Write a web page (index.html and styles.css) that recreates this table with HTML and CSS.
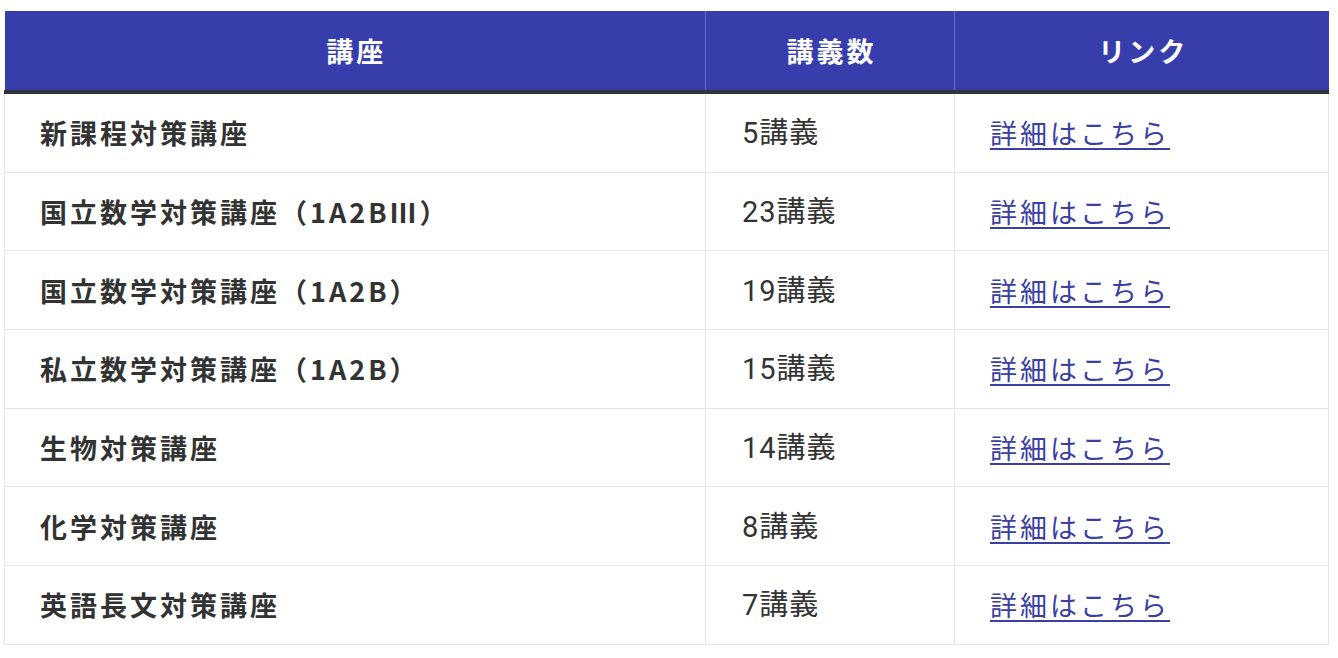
FILE: index.html
```html
<!DOCTYPE html>
<html lang="ja">
<head>
<meta charset="utf-8">
<title>講座一覧</title>
<link rel="stylesheet" href="styles.css">
</head>
<body>
<table class="course-table">
  <colgroup>
    <col class="col-name">
    <col class="col-count">
    <col class="col-link">
  </colgroup>
  <thead>
    <tr>
      <th>講座</th>
      <th>講義数</th>
      <th>リンク</th>
    </tr>
  </thead>
  <tbody>
    <tr><td class="name">新課程対策講座</td><td class="count">5講義</td><td class="link"><a href="#">詳細はこちら</a></td></tr>
    <tr><td class="name">国立数学対策講座（1A2BⅢ）</td><td class="count">23講義</td><td class="link"><a href="#">詳細はこちら</a></td></tr>
    <tr><td class="name">国立数学対策講座（1A2B）</td><td class="count">19講義</td><td class="link"><a href="#">詳細はこちら</a></td></tr>
    <tr><td class="name">私立数学対策講座（1A2B）</td><td class="count">15講義</td><td class="link"><a href="#">詳細はこちら</a></td></tr>
    <tr><td class="name">生物対策講座</td><td class="count">14講義</td><td class="link"><a href="#">詳細はこちら</a></td></tr>
    <tr><td class="name">化学対策講座</td><td class="count">8講義</td><td class="link"><a href="#">詳細はこちら</a></td></tr>
    <tr><td class="name">英語長文対策講座</td><td class="count">7講義</td><td class="link"><a href="#">詳細はこちら</a></td></tr>
  </tbody>
</table>
</body>
</html>
```

FILE: styles.css
```css
html, body {
  margin: 0;
  padding: 0;
  background: #ffffff;
}

body {
  padding: 11px 10px 0 4px;
  font-family: "Noto Sans CJK JP", sans-serif;
  color: #333333;
}

.course-table {
  width: 1324px;
  border-collapse: collapse;
  table-layout: fixed;
}

.col-name { width: 701px; }
.col-count { width: 249px; }
.col-link { width: 374px; }

.course-table th {
  background: #373eac;
  color: #ffffff;
  font-family: "Noto Sans CJK JP", sans-serif;
  font-weight: 700;
  font-size: 27px;
  line-height: 1;
  letter-spacing: 3px;
  height: 79px;
  padding: 0 0 0 3px;
  text-align: center;
  vertical-align: middle;
  border-left: 1px solid #6a70c8;
  border-bottom: 4px solid #33343a;
}

.course-table th:first-child {
  border-left: none;
}

.course-table td {
  border: 1px solid #e6e6e6;
  height: 77.7px;
  padding: 0 35px 0 35px;
  line-height: 1;
  vertical-align: middle;
  text-align: left;
}

.course-table td.name {
  font-family: "Noto Sans CJK JP", sans-serif;
  font-weight: 700;
  font-size: 27px;
  letter-spacing: 3px;
}

.course-table td.count {
  font-family: "Roboto", "Noto Sans CJK JP", sans-serif;
  font-weight: 400;
  font-size: 29px;
  letter-spacing: 1px;
  height: 75.7px;
  padding-left: 36px;
  padding-top: 2px;
}

.course-table td.link {
  font-size: 27px;
  padding-left: 35px;
}

.course-table a {
  color: #3a40a3;
  text-decoration: underline;
  text-decoration-thickness: 2px;
  text-underline-offset: 4px;
  letter-spacing: 3px;
  font-family: "Noto Sans CJK JP", sans-serif;
  font-weight: 400;
}
```
